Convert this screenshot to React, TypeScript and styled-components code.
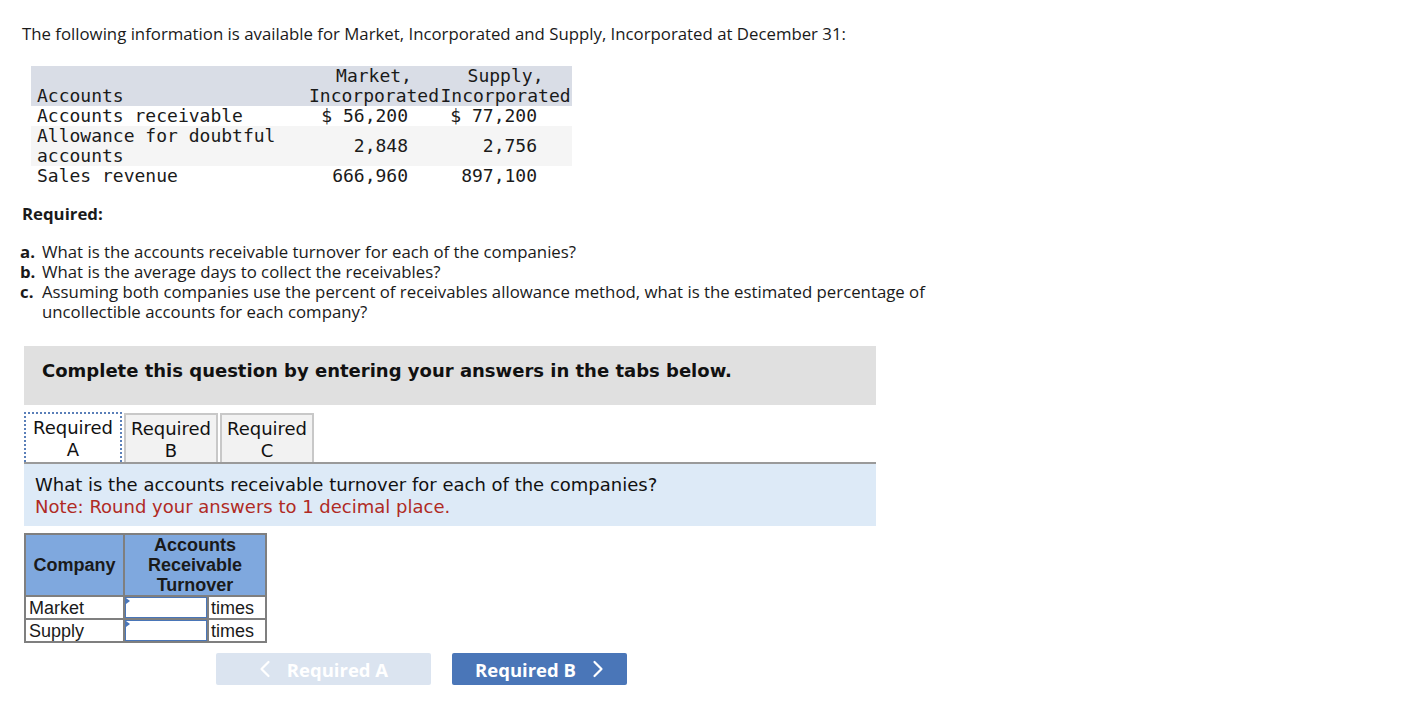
import React from "react";
import styled, { createGlobalStyle } from "styled-components";

const GlobalStyle = createGlobalStyle`
  body {
    margin: 0;
    background: #ffffff;
    color: #1a1a1a;
    font-family: "Open Sans", Lato, sans-serif;
  }
`;

const Page = styled.main`
  padding: 24px 0 0 22px;
`;

const Intro = styled.p`
  margin: 0;
  font-size: 16.8px;
  line-height: 20px;
`;

const DataTable = styled.table`
  margin: 22px 0 0 9px;
  border-collapse: collapse;
  font-family: "DejaVu Sans Mono", "Liberation Mono", monospace;
  font-size: 18px;
  line-height: 20px;
  color: #1a1a1a;

  td,
  th {
    padding: 0;
    font-weight: normal;
    vertical-align: middle;
  }
`;

const HeadRow = styled.tr`
  background: #d9dde6;

  th {
    text-align: center;
    vertical-align: bottom;
  }
`;

const BodyRow = styled.tr<{ $shaded?: boolean }>`
  background: ${({ $shaded }) => ($shaded ? "#f5f5f5" : "#ffffff")};
`;

const LabelCell = styled.td`
  width: 272px;
  padding-left: 6px !important;
  text-align: left;
`;

const HeadLabel = styled.th`
  width: 272px;
  padding-left: 6px !important;
  text-align: left !important;
`;

const ValueCell = styled.td<{ $pad: number }>`
  text-align: right;
  padding-right: ${({ $pad }) => $pad}px !important;
  white-space: pre;
`;

const Required = styled.h4`
  margin: 18px 0 0;
  font-size: 16.8px;
  line-height: 20px;
  font-weight: 700;
`;

const Tasks = styled.ol`
  list-style: none;
  margin: 18px 0 0 -2px;
  padding: 0;
  font-size: 16.8px;
  line-height: 20px;
  max-width: 960px;
`;

const Task = styled.li`
  display: grid;
  grid-template-columns: 22px 1fr;
`;

const TaskLetter = styled.b`
  font-weight: 700;
`;

const Workspace = styled.section`
  width: 852px;
  margin: 24px 0 0 2px;
  font-family: "DejaVu Sans", Verdana, sans-serif;
`;

const Banner = styled.div`
  box-sizing: border-box;
  background: #e0e0e0;
  height: 59px;
  padding: 14px 0 0 18px;
  font-weight: 700;
  font-size: 18px;
  line-height: 22px;
  color: #111;
`;

const TabBar = styled.div`
  margin-top: 7px;
  display: flex;
  align-items: flex-end;
  gap: 2px;
  border-bottom: 2px solid #9a9a9a;
`;

const Tab = styled.button<{ $active?: boolean }>`
  all: unset;
  box-sizing: border-box;
  width: ${({ $active }) => ($active ? 98 : 94)}px;
  height: ${({ $active }) => ($active ? 50 : 49)}px;
  font-family: "DejaVu Sans", Verdana, sans-serif;
  font-size: 18px;
  line-height: 22px;
  text-align: center;
  color: #111;
  background: ${({ $active }) => ($active ? "#ffffff" : "#f2f2f2")};
  border: ${({ $active }) =>
    $active ? "2px dotted #5a7fb8" : "2px solid #c8c8c8"};
  border-bottom: none;
  padding-top: 2px;
`;

const Prompt = styled.div`
  background: #ddeaf7;
  padding: 10px 11px 8px;
  font-size: 18px;
  line-height: 22px;
  color: #111;
`;

const Note = styled.div`
  color: #b02a24;
`;

const AnswerTable = styled.table`
  margin-top: 7px;
  border-collapse: collapse;
  font-family: "Liberation Sans", Arial, sans-serif;
  font-size: 18px;
  line-height: 20px;
  color: #1a1a1a;

  th,
  td {
    border: 2px solid #7f7f7f;
    padding: 0;
  }
`;

const AnswerHead = styled.th<{ $w: number }>`
  background: #7fa8de;
  font-weight: 700;
  font-size: 18px;
  width: ${({ $w }) => $w}px;
  text-align: center;
  padding: 0 !important;
  height: 60px;
`;

const NameCell = styled.td`
  text-align: left;
  padding-left: 3px !important;
  height: 21px;
`;

const InputCell = styled.td`
  width: 82px;
  position: relative;
`;

const AnswerInput = styled.input`
  box-sizing: border-box;
  display: block;
  width: 82px;
  height: 21px;
  border: 1px solid #4a76b8;
  margin: 0;
  padding: 0 3px;
  font: inherit;
  background: #fff;
  outline: none;
`;

const Flag = styled.span`
  position: absolute;
  left: 1px;
  top: 1px;
  width: 0;
  height: 0;
  border-top: 3px solid transparent;
  border-bottom: 3px solid transparent;
  border-left: 4px solid #4a76b8;
`;

const UnitCell = styled.td`
  width: 54px;
  padding-left: 2px !important;
`;

const Nav = styled.div`
  display: flex;
  gap: 21px;
  margin: 10px 0 0 192px;
`;

const NavButton = styled.button<{ $disabled?: boolean; $w: number }>`
  all: unset;
  box-sizing: border-box;
  width: ${({ $w }) => $w}px;
  height: 32px;
  border-radius: 2px;
  display: flex;
  align-items: center;
  justify-content: center;
  gap: 16px;
  background: ${({ $disabled }) => ($disabled ? "#dbe4f0" : "#4a76b8")};
  color: #ffffff;
  font-family: "Open Sans", Lato, sans-serif;
  font-weight: 700;
  font-size: 18.5px;
  cursor: ${({ $disabled }) => ($disabled ? "default" : "pointer")};
`;

const Chevron = ({ dir }: { dir: "left" | "right" }) => (
  <svg width="12" height="18" viewBox="0 0 12 18" fill="none">
    <path
      d={dir === "left" ? "M9.5 2 L2.5 9 L9.5 16" : "M2.5 2 L9.5 9 L2.5 16"}
      stroke="#ffffff"
      strokeWidth="2.2"
      strokeLinecap="round"
      strokeLinejoin="round"
    />
  </svg>
);

const rows = [
  { label: "Accounts receivable", market: "$ 56,200", supply: "$ 77,200" },
  { label: "Allowance for doubtful accounts", market: "2,848", supply: "2,756", shaded: true },
  { label: "Sales revenue", market: "666,960", supply: "897,100" },
];

const App = () => {
  return (
    <Page>
      <GlobalStyle />
      <Intro>
        The following information is available for Market, Incorporated and
        Supply, Incorporated at December 31:
      </Intro>

      <DataTable>
        <thead>
          <HeadRow>
            <HeadLabel>Accounts</HeadLabel>
            <th style={{ width: 130 }}>
              Market,
              <br />
              Incorporated
            </th>
            <th style={{ width: 133 }}>
              Supply,
              <br />
              Incorporated
            </th>
          </HeadRow>
        </thead>
        <tbody>
          {rows.map((r) => (
            <BodyRow key={r.label} $shaded={r.shaded}>
              <LabelCell>{r.label}</LabelCell>
              <ValueCell $pad={31}>{r.market}</ValueCell>
              <ValueCell $pad={35}>{r.supply}</ValueCell>
            </BodyRow>
          ))}
        </tbody>
      </DataTable>

      <Required>Required:</Required>
      <Tasks>
        <Task>
          <TaskLetter>a.</TaskLetter>
          <span>What is the accounts receivable turnover for each of the companies?</span>
        </Task>
        <Task>
          <TaskLetter>b.</TaskLetter>
          <span>What is the average days to collect the receivables?</span>
        </Task>
        <Task>
          <TaskLetter>c.</TaskLetter>
          <span>
            Assuming both companies use the percent of receivables allowance
            method, what is the estimated percentage of uncollectible accounts
            for each company?
          </span>
        </Task>
      </Tasks>

      <Workspace>
        <Banner>Complete this question by entering your answers in the tabs below.</Banner>
        <TabBar>
          <Tab $active>
            Required
            <br />A
          </Tab>
          <Tab>
            Required
            <br />B
          </Tab>
          <Tab>
            Required
            <br />C
          </Tab>
        </TabBar>
        <Prompt>
          What is the accounts receivable turnover for each of the companies?
          <Note>Note: Round your answers to 1 decimal place.</Note>
        </Prompt>

        <AnswerTable>
          <thead>
            <tr>
              <AnswerHead $w={97}>Company</AnswerHead>
              <AnswerHead $w={140} colSpan={2}>
                Accounts
                <br />
                Receivable
                <br />
                Turnover
              </AnswerHead>
            </tr>
          </thead>
          <tbody>
            {["Market", "Supply"].map((name) => (
              <tr key={name}>
                <NameCell>{name}</NameCell>
                <InputCell>
                  <AnswerInput aria-label={`${name} turnover`} />
                  <Flag />
                </InputCell>
                <UnitCell>times</UnitCell>
              </tr>
            ))}
          </tbody>
        </AnswerTable>

        <Nav>
          <NavButton $disabled $w={215}>
            <Chevron dir="left" />
            Required A
          </NavButton>
          <NavButton $w={175}>
            Required B
            <Chevron dir="right" />
          </NavButton>
        </Nav>
      </Workspace>
    </Page>
  );
};

export default App;
